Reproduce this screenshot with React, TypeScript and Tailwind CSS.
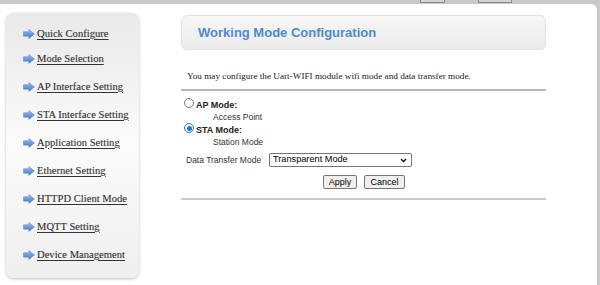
import React from 'react';

const menu = [
    "Quick Configure",
    "Mode Selection",
    "AP Interface Setting",
    "STA Interface Setting",
    "Application Setting",
    "Ethernet Setting",
    "HTTPD Client Mode",
    "MQTT Setting",
    "Device Management",
];

const Arrow = () => (
    <svg width="12" height="10" viewBox="0 0 12 10" className="shrink-0">
        <defs>
            <linearGradient id="ag" x1="0" y1="0" x2="0" y2="1">
                <stop offset="0" stopColor="#9cc0f0" />
                <stop offset="1" stopColor="#3c74cc" />
            </linearGradient>
        </defs>
        <path d="M0.5 2.8 H5.8 V0.5 L11.5 5 L5.8 9.5 V7.2 H0.5 Z" fill="url(#ag)" stroke="#5585cf" strokeWidth="0.5" />
    </svg>
);

const App: React.FC = () => {
    return (
        <div className="w-[600px] h-[285px] bg-[#c9c9c9] flex flex-col overflow-hidden">
            {/* top strip */}
            <div className="h-[4px] shrink-0 relative">
                <div className="absolute left-[420px] top-0 w-[25px] h-[3px] border-b border-x border-[#8a8a8a] bg-[#d4d4d4]" />
                <div className="absolute left-[478px] top-0 w-[34px] h-[3px] border-b border-x border-[#8a8a8a] bg-[#d4d4d4]" />
            </div>
            <div className="flex-1 bg-white mr-[3px] rounded-tr-[6px] flex pl-[6px] pt-[9px]">
                {/* sidebar */}
                <div className="w-[133px] h-[265px] rounded-[8px] bg-gradient-to-b from-[#e9e9e9] via-[#fbfbfb] to-[#efefef] shadow-[0_1px_3px_rgba(0,0,0,0.25)] flex flex-col pl-[17px] pt-[15px]">
                    {menu.map((m, i) => (
                        <a
                            key={m}
                            href="#"
                            className={`flex items-center gap-[2px] h-[12px] text-[10.6px] leading-none text-[#333] underline underline-offset-2 [text-shadow:0_0_1px_rgba(0,0,0,0.22)] ${i === 0 ? '' : i === 1 ? 'mt-[13px]' : 'mt-[16px]'}`}
                            style={{ fontFamily: '"Liberation Serif", serif' }}
                        >
                            <Arrow />
                            <span>{m}</span>
                        </a>
                    ))}
                </div>
                {/* content */}
                <div className="ml-[42px] w-[365px] flex flex-col" style={{ fontFamily: '"Liberation Sans", Arial, sans-serif' }}>
                    <div className="mt-[2px] h-[35px] rounded-[6px] border border-[#e2e2e2] bg-gradient-to-b from-[#f7f7f7] to-[#ececec] flex items-center pl-[16px]">
                        <span className="text-[13px] font-bold text-[#4d8ad0]">Working Mode Configuration</span>
                    </div>
                    <div className="mt-[20px] pl-[6px] text-[9.2px] leading-[12px] text-[#222]" style={{ fontFamily: '"Liberation Serif", serif' }}>
                        You may configure the Uart-WIFI module wifi mode and data transfer mode.
                    </div>
                    <div className="mt-[7px] h-[2px] bg-[#b9b9b9]" />
                    <div className="flex items-end h-[12px] mt-[7px] pl-[3px]">
                        <span className="self-start w-[10px] h-[10px] rounded-full border border-[#767676] bg-white" />
                        <span className="ml-[2px] text-[9px] leading-[9px] font-bold text-[#222]">AP Mode:</span>
                    </div>
                    <div className="mt-[2px] pl-[32px] h-[10px] leading-[10px] text-[8.5px] text-[#333]">Access Point</div>
                    <div className="flex items-end h-[12px] mt-[1px] pl-[3px]">
                        <span className="self-start w-[10px] h-[10px] rounded-full border-[1.5px] border-[#1a73e8] bg-white flex items-center justify-center">
                            <span className="w-[5px] h-[5px] rounded-full bg-[#1a73e8]" />
                        </span>
                        <span className="ml-[2px] text-[9px] leading-[9px] font-bold text-[#222]">STA Mode:</span>
                    </div>
                    <div className="mt-[2px] pl-[32px] h-[10px] leading-[10px] text-[8.5px] text-[#333]">Station Mode</div>
                    <div className="flex items-center h-[14px] mt-[6px] pl-[5px]">
                        <span className="w-[83px] whitespace-nowrap text-[8.5px] leading-none text-[#333]">Data Transfer Mode</span>
                        <div className="w-[143px] h-[14px] border border-[#767676] rounded-[2px] flex items-center justify-between pl-[3px] pr-[4px] bg-white">
                            <span className="text-[9.2px] text-black leading-none">Transparent Mode</span>
                            <svg width="7" height="5" viewBox="0 0 7 5"><path d="M1 1 L3.5 3.5 L6 1" stroke="#111" strokeWidth="1.5" fill="none" /></svg>
                        </div>
                    </div>
                    <div className="flex gap-[7px] h-[14px] mt-[8px] pl-[142px]">
                        <button className="w-[34px] h-[14px] text-[9px] leading-none border border-[#767676] rounded-[2px] bg-[#efefef] text-black">Apply</button>
                        <button className="w-[41px] h-[14px] text-[9px] leading-none border border-[#767676] rounded-[2px] bg-[#efefef] text-black">Cancel</button>
                    </div>
                    <div className="mt-[9px] h-[2px] bg-[#c9c9c9]" />
                </div>
            </div>
        </div>
    );
};

export default App;
